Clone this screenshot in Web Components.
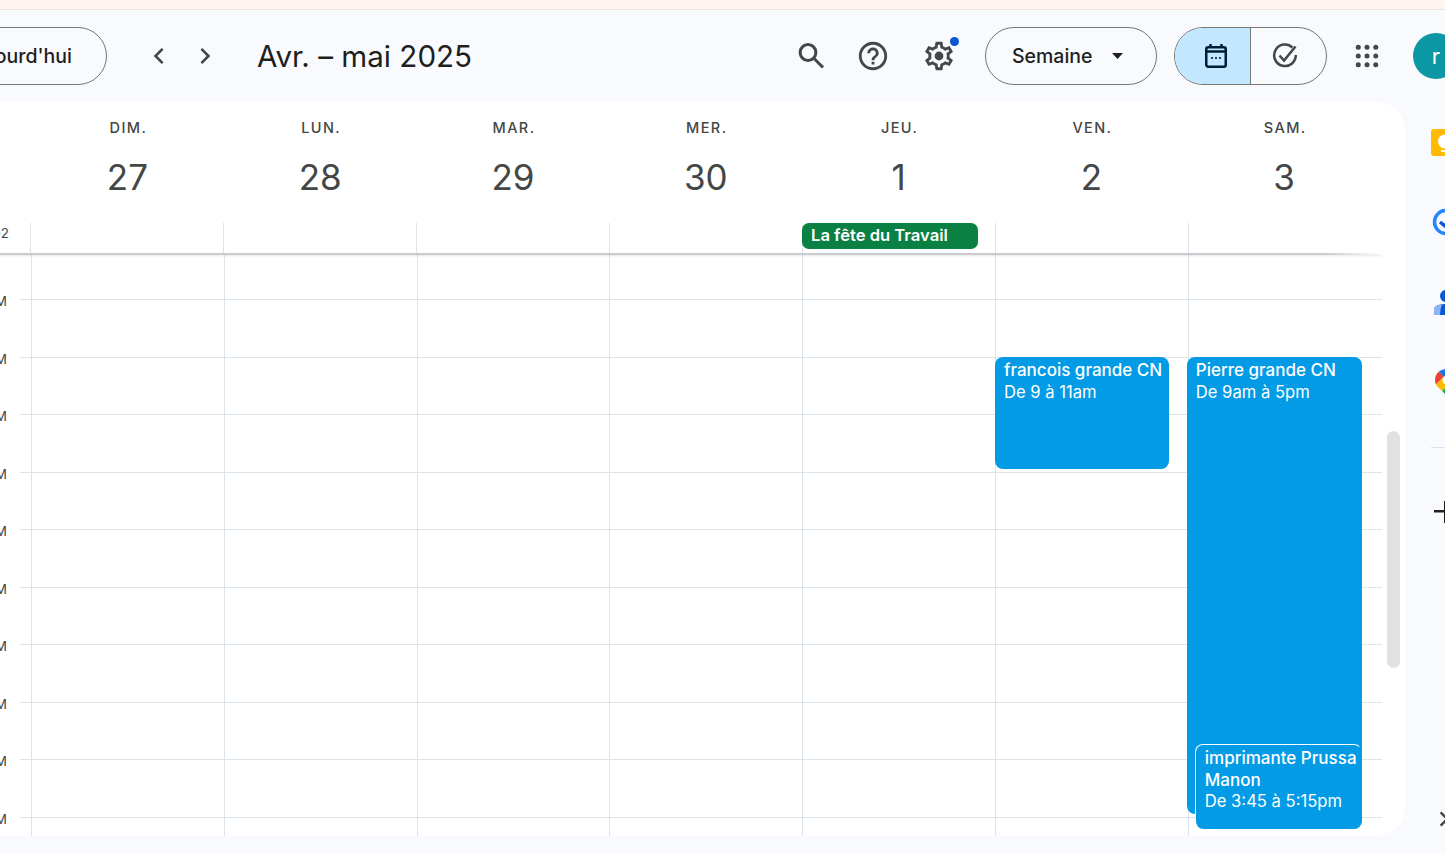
<!DOCTYPE html>
<html lang="fr">
<head>
<meta charset="utf-8">
<title>Agenda</title>
<style>
  html, body { margin: 0; height: 100%; overflow: hidden; background: #f8fafd; }
  body { font-family: "Inter", "Roboto", sans-serif; color: #1f1f1f; }
</style>
</head>
<body>
<gc-app>
  <gc-toolbar slot="toolbar"></gc-toolbar>
  <gc-panel slot="panel">
    <gc-day-head slot="head" day="DIM." date="27"></gc-day-head>
    <gc-day-head slot="head" day="LUN." date="28"></gc-day-head>
    <gc-day-head slot="head" day="MAR." date="29"></gc-day-head>
    <gc-day-head slot="head" day="MER." date="30"></gc-day-head>
    <gc-day-head slot="head" day="JEU." date="1"></gc-day-head>
    <gc-day-head slot="head" day="VEN." date="2"></gc-day-head>
    <gc-day-head slot="head" day="SAM." date="3"></gc-day-head>

    <gc-allday-cell slot="allday"></gc-allday-cell>
    <gc-allday-cell slot="allday"></gc-allday-cell>
    <gc-allday-cell slot="allday"></gc-allday-cell>
    <gc-allday-cell slot="allday"></gc-allday-cell>
    <gc-allday-cell slot="allday"><gc-chip>La fête du Travail</gc-chip></gc-allday-cell>
    <gc-allday-cell slot="allday"></gc-allday-cell>
    <gc-allday-cell slot="allday"></gc-allday-cell>

    <gc-hour-row slot="hours" label="8 AM"></gc-hour-row>
    <gc-hour-row slot="hours" label="9 AM"></gc-hour-row>
    <gc-hour-row slot="hours" label="10 AM"></gc-hour-row>
    <gc-hour-row slot="hours" label="11 AM"></gc-hour-row>
    <gc-hour-row slot="hours" label="12 PM"></gc-hour-row>
    <gc-hour-row slot="hours" label="1 PM"></gc-hour-row>
    <gc-hour-row slot="hours" label="2 PM"></gc-hour-row>
    <gc-hour-row slot="hours" label="3 PM"></gc-hour-row>
    <gc-hour-row slot="hours" label="4 PM"></gc-hour-row>
    <gc-hour-row slot="hours" label="5 PM"></gc-hour-row>

    <gc-day-col slot="days"></gc-day-col>
    <gc-day-col slot="days"></gc-day-col>
    <gc-day-col slot="days"></gc-day-col>
    <gc-day-col slot="days"></gc-day-col>
    <gc-day-col slot="days"></gc-day-col>
    <gc-day-col slot="days">
      <gc-event top="104" left="-1" width="174" height="112">
        <b>francois grande CN</b><br>De 9 à 11am
      </gc-event>
    </gc-day-col>
    <gc-day-col slot="days">
      <gc-event top="104" left="-2" width="175" height="457">
        <b>Pierre grande CN</b><br>De 9am à 5pm
      </gc-event>
      <gc-event top="491" left="6" width="167" height="85" outlined>
        <b>imprimante Prussa Manon</b><br>De 3:45 à 5:15pm
      </gc-event>
    </gc-day-col>
  </gc-panel>
  <gc-rail slot="rail"></gc-rail>
</gc-app>

<script>
const ICONS = {
  left: '<path d="M15.4 7.4 14 6l-6 6 6 6 1.4-1.4-4.6-4.6z"/>',
  right: '<path d="M8.6 7.4 10 6l6 6-6 6-1.4-1.4 4.6-4.6z"/>',
  help: '<path d="M11 18h2v-2h-2v2zm1-16C6.48 2 2 6.48 2 12s4.48 10 10 10 10-4.48 10-10S17.52 2 12 2zm0 18c-4.41 0-8-3.59-8-8s3.59-8 8-8 8 3.59 8 8-3.59 8-8 8zm0-14c-2.21 0-4 1.79-4 4h2c0-1.1.9-2 2-2s2 .9 2 2c0 2-3 1.75-3 5h2c0-2.25 3-2.5 3-5 0-2.21-1.79-4-4-4z"/>',
  gear: '<path d="M19.43 12.98c.04-.32.07-.64.07-.98 0-.34-.03-.66-.07-.98l2.11-1.65c.19-.15.24-.42.12-.64l-2-3.46c-.09-.16-.26-.25-.44-.25-.06 0-.12.01-.17.03l-2.49 1c-.52-.4-1.08-.73-1.69-.98l-.38-2.65C14.46 2.18 14.25 2 14 2h-4c-.25 0-.46.18-.49.42l-.38 2.65c-.61.25-1.17.59-1.69.98l-2.49-1c-.06-.02-.12-.03-.18-.03-.17 0-.34.09-.43.25l-2 3.46c-.13.22-.07.49.12.64l2.11 1.65c-.04.32-.07.65-.07.98 0 .33.03.66.07.98l-2.11 1.65c-.19.15-.24.42-.12.64l2 3.46c.09.16.26.25.44.25.06 0 .12-.01.17-.03l2.49-1c.52.4 1.08.73 1.69.98l.38 2.65c.03.24.24.42.49.42h4c.25 0 .46-.18.49-.42l.38-2.65c.61-.25 1.17-.59 1.69-.98l2.49 1c.06.02.12.03.18.03.17 0 .34-.09.43-.25l2-3.46c.12-.22.07-.49-.12-.64l-2.11-1.65zm-1.98-1.71c.04.31.05.52.05.73 0 .21-.02.43-.05.73l-.14 1.13.89.7 1.08.84-.7 1.21-1.27-.51-1.04-.42-.9.68c-.43.32-.84.56-1.25.73l-1.06.43-.16 1.13-.2 1.35h-1.4l-.19-1.35-.16-1.13-1.06-.43c-.43-.18-.83-.41-1.23-.71l-.91-.7-1.06.43-1.27.51-.7-1.21 1.08-.84.89-.7-.14-1.13c-.03-.31-.05-.54-.05-.74s.02-.43.05-.73l.14-1.13-.89-.7-1.08-.84.7-1.21 1.27.51 1.04.42.9-.68c.43-.32.84-.56 1.25-.73l1.06-.43.16-1.13.2-1.35h1.39l.19 1.35.16 1.13 1.06.43c.43.18.83.41 1.23.71l.91.7 1.06-.43 1.27-.51.7 1.21-1.07.85-.89.7.14 1.13z"/><circle cx="12" cy="12" r="3.100"/>',
  apps: '<circle cx="5" cy="5" r="2"/><circle cx="12" cy="5" r="2"/><circle cx="19" cy="5" r="2"/><circle cx="5" cy="12" r="2"/><circle cx="12" cy="12" r="2"/><circle cx="19" cy="12" r="2"/><circle cx="5" cy="19" r="2"/><circle cx="12" cy="19" r="2"/><circle cx="19" cy="19" r="2"/>'
};

function icon(name, size, color) {
  return `<svg width="${size}" height="${size}" viewBox="0 0 24 24" fill="${color}" aria-hidden="true">${ICONS[name]}</svg>`;
}

class GcApp extends HTMLElement {
  constructor() {
    super();
    this.attachShadow({ mode: "open" }).innerHTML = `
      <style>
        :host {
          display: grid;
          grid-template-columns: 1474px 66px;
          grid-template-rows: 10px 92px 734px;
          width: 1540px;
          margin-left: -69px;
        }
        .banner { grid-column: 1 / 3; background: #fff4ef; border-bottom: 1px solid #eae6e6; box-sizing: border-box; }
        ::slotted([slot="toolbar"]) { grid-column: 1 / 3; }
      </style>
      <div class="banner"></div>
      <slot name="toolbar"></slot>
      <slot name="panel"></slot>
      <slot name="rail"></slot>
    `;
  }
}

class GcToolbar extends HTMLElement {
  constructor() {
    super();
    this.attachShadow({ mode: "open" }).innerHTML = `
      <style>
        :host {
          display: flex;
          align-items: center;
          height: 92px;
          padding: 0 12px 0 6px;
          box-sizing: border-box;
          font-size: 19.500px;
          color: #1f1f1f;
        }
        .pill {
          height: 58px;
          box-sizing: border-box;
          border: 1px solid #747775;
          border-radius: 29px;
          display: flex;
          align-items: center;
          font-weight: 500;
          white-space: nowrap;
        }
        .today { width: 170px; justify-content: flex-end; padding-right: 34px; margin-right: 29px; }
        .btn { width: 46px; height: 46px; display: flex; align-items: center; justify-content: center; position: relative; }
        h1 { font-size: 29.600px; font-weight: 400; margin: 0 0 0 29px; flex: 1; white-space: nowrap; }
        .dot { position: absolute; top: 3.500px; right: 3.500px; width: 9px; height: 9px; border-radius: 50%; background: #0b57d0; }
        .view { width: 172px; margin-left: 23px; padding-left: 26px; }
        .view svg { margin-left: 19px; }
        .toggle { width: 153px; margin-left: 17px; overflow: hidden; align-items: stretch; }
        .toggle div { display: flex; align-items: center; justify-content: center; }
        .on { width: 76px; background: #c2e7ff; border-right: 1px solid #747775; padding-left: 6px; box-sizing: border-box; }
        .off { flex: 1; padding-right: 8px; }
        .apps { margin-left: 17px; }
        .avatar {
          width: 46px; height: 46px; margin-left: 23px; border-radius: 50%;
          background: #0b97a4; color: #fff; font-size: 22px;
          display: flex; align-items: center; justify-content: center;
        }
      </style>
      <div class="pill today">Aujourd'hui</div>
      <div class="btn">${icon("left", 32, "#444746")}</div>
      <div class="btn">${icon("right", 32, "#444746")}</div>
      <h1>Avr. – mai 2025</h1>
      <div class="btn" style="margin-right:16px">
        <svg width="30" height="30" viewBox="0 0 30 30" fill="none" stroke="#444746" stroke-width="3">
          <circle cx="12" cy="11.500" r="7.900"/><path d="m17.800 17.300 9.200 9.200"/>
        </svg>
      </div>
      <div class="btn" style="margin-right:20px">${icon("help", 34, "#444746")}</div>
      <div class="btn">${icon("gear", 34, "#444746")}<span class="dot"></span></div>
      <div class="pill view">Semaine
        <svg width="11" height="6" viewBox="0 0 11 6" fill="#1f1f1f"><path d="M0 0h11L5.500 6z"/></svg>
      </div>
      <div class="pill toggle">
        <div class="on">
          <svg width="24" height="26" viewBox="0 0 24 26" fill="none" stroke="#001d35" stroke-width="2.500">
            <rect x="2.250" y="4.250" width="19.500" height="19.500" rx="2"/>
            <path d="M6.500 1v4M17.500 1v4"/>
            <path d="M2.500 8.500h19" stroke-width="2.500"/>
            <g fill="#001d35" stroke="none"><circle cx="8" cy="15" r="1.100"/><circle cx="12" cy="15" r="1.100"/><circle cx="16" cy="15" r="1.100"/></g>
          </svg>
        </div>
        <div class="off">
          <svg width="26" height="26" viewBox="0 0 26 26" fill="none" stroke="#444746" stroke-width="2.500">
            <path d="M20.500 4.500A10.800 10.800 0 1 0 23.800 12"/>
            <path d="m7.500 12.500 4.500 5L23.500 3.500"/>
          </svg>
        </div>
      </div>
      <div class="btn apps">${icon("apps", 30, "#444746")}</div>
      <div class="avatar">r</div>
    `;
  }
}

class GcPanel extends HTMLElement {
  constructor() {
    super();
    this.attachShadow({ mode: "open" }).innerHTML = `
      <style>
        :host {
          display: flex;
          flex-direction: column;
          height: 734px;
          background: #fff;
          border-radius: 0 28px 28px 0;
          overflow: hidden;
        }
        .head, .days { display: grid; grid-template-columns: repeat(7, 192.8px); }
        .head { height: 121px; padding-left: 100px; }
        .allday { height: 30px; display: grid; grid-template-columns: 99px repeat(7, 193px); }
        .zone {
          padding-right: 21px;
          text-align: right;
          font-size: 13.500px;
          line-height: 20px;
          color: #444746;
        }
        .rule {
          height: 2px;
          margin-right: 23px;
          background: linear-gradient(to right, #c9cbcf 96%, rgba(201, 203, 207, 0) 100%);
          box-shadow: 0 1px 2px rgba(60, 64, 67, .12);
          position: relative;
          z-index: 2;
        }
        .body { flex: 1; display: flex; min-height: 0; margin-top: -2px; }
        .grid { width: 1451px; position: relative; overflow: hidden; padding-top: 46px; box-sizing: border-box; }
        .days { position: absolute; inset: 0 auto 0 100px; }
        .track { padding: 178px 0 0 5px; }
        .thumb { width: 13px; height: 237px; border-radius: 7px; background: #e1e1e1; }
      </style>
      <div class="head"><slot name="head"></slot></div>
      <div class="allday"><div class="zone">GMT+02</div><slot name="allday"></slot></div>
      <div class="rule"></div>
      <div class="body">
        <div class="grid">
          <slot name="hours"></slot>
          <div class="days"><slot name="days"></slot></div>
        </div>
        <div class="track"><div class="thumb"></div></div>
      </div>
    `;
  }
}

class GcDayHead extends HTMLElement {
  constructor() {
    super();
    const shadow = this.attachShadow({ mode: "open" });
    shadow.innerHTML = `
      <style>
        :host {
          display: flex;
          flex-direction: column;
          align-items: center;
          color: #444746;
        }
        .day { margin: 17px 0 0 2px; font-size: 14.500px; line-height: 18px; font-weight: 500; letter-spacing: 1.400px; }
        .date { margin-top: 15px; font-size: 35px; line-height: 50px; font-weight: 400; }
      </style>
      <div class="day">${this.getAttribute("day")}</div>
      <div class="date">${this.getAttribute("date")}</div>
    `;
  }
}

class GcAlldayCell extends HTMLElement {
  constructor() {
    super();
    this.attachShadow({ mode: "open" }).innerHTML = `
      <style>
        :host { display: block; border-left: 1px solid #dde3ea; }
      </style>
      <slot></slot>
    `;
  }
}

class GcChip extends HTMLElement {
  constructor() {
    super();
    this.attachShadow({ mode: "open" }).innerHTML = `
      <style>
        :host {
          display: block;
          width: 176px;
          height: 26px;
          margin-left: -1px;
          box-sizing: border-box;
          padding-left: 9px;
          border-radius: 7px;
          background: #0b8043;
          color: #fff;
          font-size: 16.600px;
          line-height: 25px;
          font-weight: 600;
          white-space: nowrap;
        }
      </style>
      <slot></slot>
    `;
  }
}

class GcHourRow extends HTMLElement {
  constructor() {
    super();
    this.attachShadow({ mode: "open" }).innerHTML = `
      <style>
        :host { display: grid; grid-template-columns: 89px 1fr; height: 57.5px; }
        .label {
          margin-top: -6px;
          padding-right: 13px;
          text-align: right;
          font-size: 13.500px;
          line-height: 16px;
          color: #444746;
        }
        .line { border-top: 1px solid #dde3ea; }
      </style>
      <div class="label">${this.getAttribute("label")}</div>
      <div class="line"></div>
    `;
  }
}

class GcDayCol extends HTMLElement {
  constructor() {
    super();
    this.attachShadow({ mode: "open" }).innerHTML = `
      <style>
        :host { display: block; position: relative; border-left: 1px solid #dde3ea; }
      </style>
      <slot></slot>
    `;
  }
}

class GcEvent extends HTMLElement {
  constructor() {
    super();
    const get = (name) => this.getAttribute(name);
    const outlined = this.hasAttribute("outlined");
    this.attachShadow({ mode: "open" }).innerHTML = `
      <style>
        :host {
          position: absolute;
          top: ${get("top")}px;
          left: ${get("left")}px;
          width: ${get("width")}px;
          height: ${get("height")}px;
          box-sizing: border-box;
          padding: 3px 4px 0 9px;
          border-radius: 8px;
          background: #039be5;
          color: #fff;
          font-size: 16.600px;
          line-height: 21.500px;
          overflow: hidden;
          ${outlined ? "border: 1px solid #fff; border-bottom: 0; border-right-color: #039be5;" : ""}
        }
        ::slotted(b) { font-weight: 500; font-size: 17px; }
      </style>
      <slot></slot>
    `;
  }
}

class GcRail extends HTMLElement {
  constructor() {
    super();
    this.attachShadow({ mode: "open" }).innerHTML = `
      <style>
        :host {
          display: flex;
          flex-direction: column;
          height: 734px;
          padding: 26px 0 0 26px;
          box-sizing: border-box;
        }
        svg { display: block; flex: none; }
        .item { height: 28px; margin-bottom: 52px; }
        .rule { width: 40px; height: 1px; background: #dde3ea; margin-top: -1px; }
        .plus { margin: 51px 0 0 2px; }
        .hide { margin: auto 0 2px -2px; }
      </style>
      <div class="item">
        <svg width="28" height="28" viewBox="0 0 28 28">
          <rect y="1" width="28" height="27" rx="3" fill="#ffba00"/>
          <circle cx="14" cy="13.500" r="7" fill="#fff"/><rect x="10" y="22" width="8" height="2" fill="#fff"/>
        </svg>
      </div>
      <div class="item">
        <svg width="28" height="28" viewBox="0 0 28 28" style="margin-left:1px">
          <circle cx="14" cy="14" r="11.500" fill="none" stroke="#2684fc" stroke-width="3.500"/>
          <path d="m8 14 5 4 8-9" fill="none" stroke="#0b57d0" stroke-width="3.500"/>
        </svg>
      </div>
      <div class="item">
        <svg width="28" height="28" viewBox="0 0 28 28" style="margin:1px 0 0 3px">
          <circle cx="12" cy="7" r="6" fill="#0b57d0"/>
          <path d="M0 26v-5c0-4 5-6 13-6s13 2 13 6v5z" fill="#0b57d0"/>
          <path d="M0 26v-5c0-3 3-5 8-5.500C7 18 6 22 6 26z" fill="#8ab4f8"/>
        </svg>
      </div>
      <div class="item">
        <svg width="24" height="28" viewBox="0 0 24 28" style="margin:1px 0 0 4px">
          <path d="M4 2.500C1.500 4.500 0 7.500 0 11c0 1.500.3 3 1 4.500l8-8z" fill="#ea4335"/>
          <path d="M4 2.500C6 1 9 0 12 0c7 0 12 5 12 11L12 11z" fill="#1a73e8"/>
          <path d="M1 15.500 9 7.500l6 6.500-8 8c-3-3-5-4.500-6-6.500z" fill="#fbbc04"/>
          <path d="m7 22 8-8 9-3c0 6-9 11-12 17-1-2-3-4-5-6z" fill="#34a853"/>
          <circle cx="12" cy="11" r="4.500" fill="#fff"/>
        </svg>
      </div>
      <div class="rule"></div>
      <div class="plus">
        <svg width="24" height="24" viewBox="0 0 24 24" fill="#1f1f1f"><path d="M11 2h2.500v9H24v2.500H13.500V24H11V13.500H1V11h10z"/></svg>
      </div>
      <div class="hide">${icon("right", 30, "#444746")}</div>
    `;
  }
}

customElements.define("gc-app", GcApp);
customElements.define("gc-toolbar", GcToolbar);
customElements.define("gc-panel", GcPanel);
customElements.define("gc-day-head", GcDayHead);
customElements.define("gc-allday-cell", GcAlldayCell);
customElements.define("gc-chip", GcChip);
customElements.define("gc-hour-row", GcHourRow);
customElements.define("gc-day-col", GcDayCol);
customElements.define("gc-event", GcEvent);
customElements.define("gc-rail", GcRail);
</script>
</body>
</html>
